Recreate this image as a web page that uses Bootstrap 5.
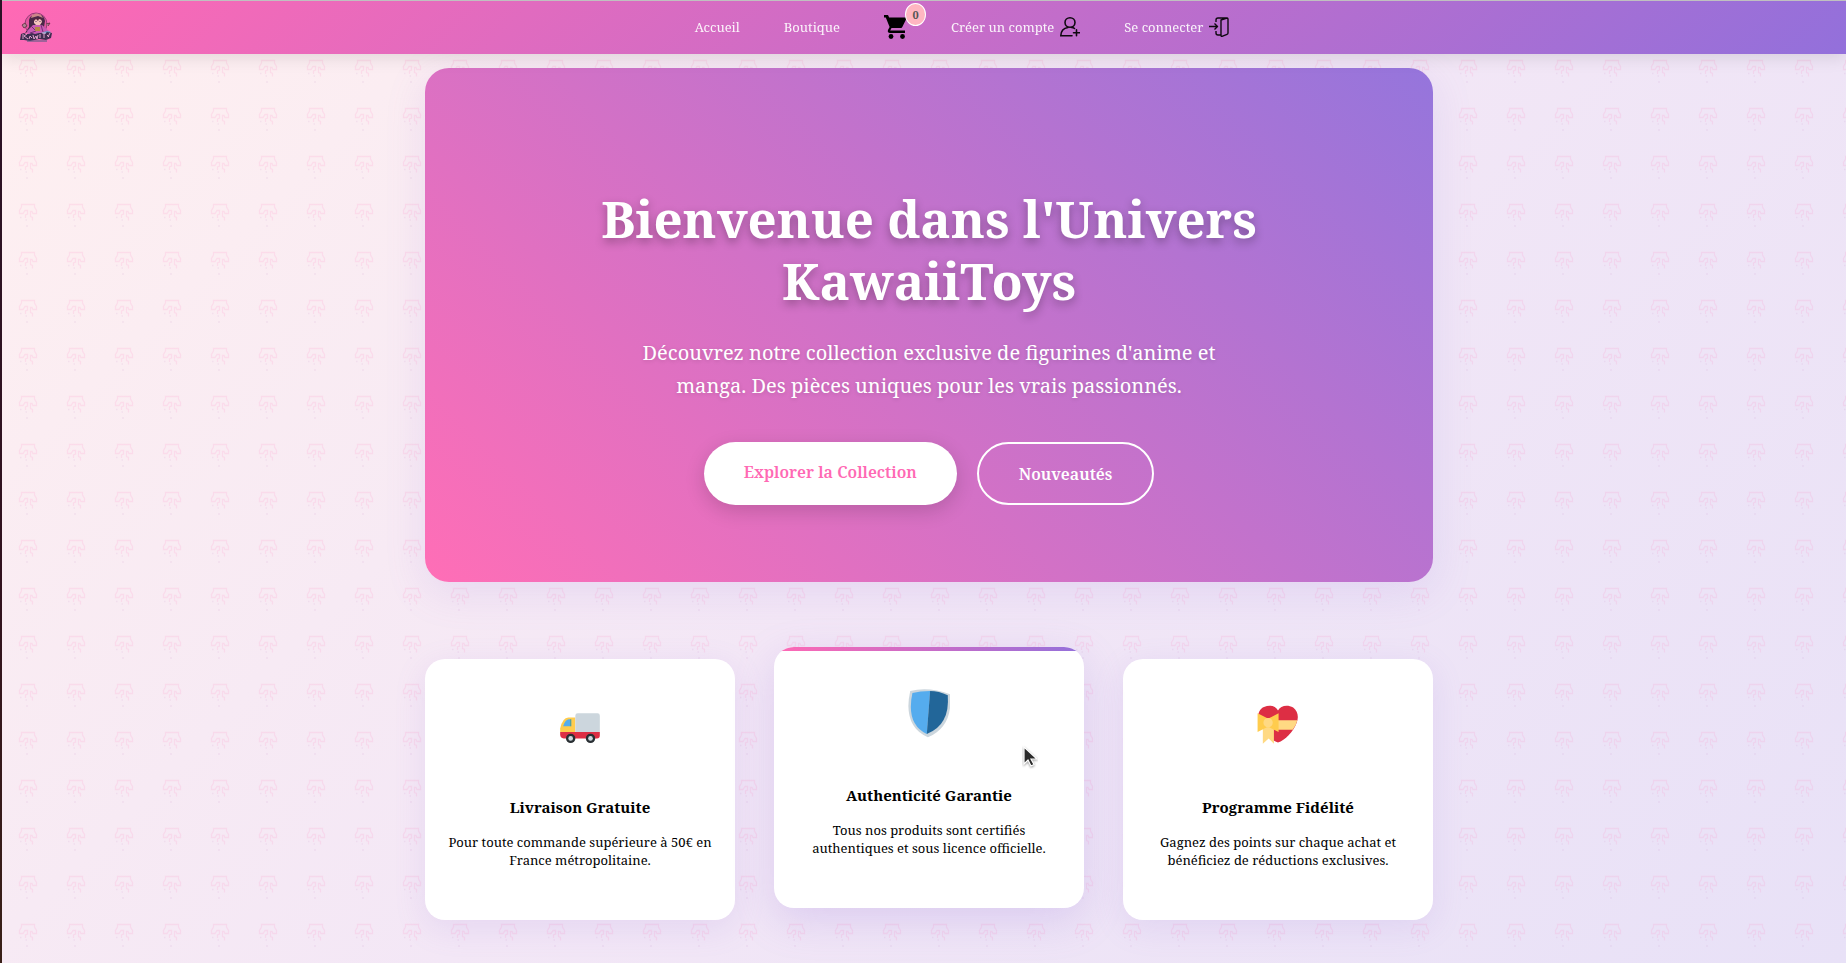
<!DOCTYPE html>
<html lang="fr">
<head>
<meta charset="utf-8">
<meta name="viewport" content="width=device-width, initial-scale=1">
<title>KawaiiToys</title>
<link href="https://cdn.jsdelivr.net/npm/bootstrap@5.3.0/dist/css/bootstrap.min.css" rel="stylesheet">
<style>
  :root { --rose: #ff69b4; --violet: #9370db; }
  html { background: linear-gradient(#2a1226, #32121f 60%, #3a2018); }
  body {
    font-family: "Noto Serif", "DejaVu Serif", serif;
    font-size: 13px; line-height: 18px; color: #000;
    min-height: 100vh; margin-left: 2px;
    border-top: 1px solid #c0c0c0;
    background:
      url("data:image/svg+xml,%3Csvg xmlns='http://www.w3.org/2000/svg' width='48' height='48'%3E%3Cg fill='none' stroke='%23ff69b4' stroke-opacity='.13' stroke-width='1.3'%3E%3Cpath d='M19.500 14v-2.500h13v2.500l2 3.500v3h-3.500l-1-2h-1.500v5l2 1v3M19.500 14l-2 3.500v3h3.500l2-3h2.500v3.500l-2 1v3'/%3E%3Cpath d='M18 24.500h1.500m4 2.500h1.500m-1 6h2' stroke='%23c080c0'/%3E%3C/g%3E%3C/svg%3E") 0 0,
      linear-gradient(135deg, #fff0f0 0%, #f3e7f6 50%, #e8e1f7 100%);
  }
  .site-bar { min-height: 53px; padding: 0 17px 2px; z-index: 2; background: linear-gradient(135deg, var(--rose), var(--violet)); box-shadow: 0 4px 16px rgba(0,0,0,.1); }
  .site-bar a { color: #fff; opacity: .92; text-decoration: none; }
  .site-bar .cart-link { opacity: 1; }
  .menu { gap: 44px; padding-left: 42px; }
  .menu-icon { margin-left: 6px; }
  .count { top: -12px; right: -19px; width: 21px; height: 23px; background: #ffb6c1; color: #555; border: 1px solid #fff; font-size: 11px; font-weight: 700; line-height: 21px; }
  .page { max-width: 1040px; padding: 14px 16px 43px; }
  .shell { padding-left: 10px; }
  .hero { border-radius: 24px; padding: 119px 160px 77px; background: linear-gradient(45deg, #ff6eb6, #9575dc); box-shadow: 0 10px 40px rgba(147,112,219,.15); color: #fff; }
  .hero h1 { font-size: 51px; line-height: 62px; font-weight: 700; margin: 0 0 25px; text-shadow: 0 4px 10px rgba(0,0,0,.3); }
  .hero .intro { font-size: 20px; line-height: 33px; max-width: 600px; margin: 0 auto 40px; text-shadow: 0 1px 4px rgba(0,0,0,.15); }
  .actions { gap: 20px; }
  .pill { border-radius: 32px; padding: 19px 40px 17px; font-size: 16px; line-height: 23px; font-weight: 600; text-decoration: none; }
  .pill-solid { background: #fff; color: var(--rose); box-shadow: 0 6px 20px rgba(0,0,0,.16); }
  .pill-line { border: 2px solid #fff; color: #fff; }
  .perks { display: grid; grid-template-columns: repeat(3, 1fr); gap: 39px; margin-top: 77px; }
  .perk { border-radius: 20px; background: #fff; padding: 36px 22px 51px; box-shadow: 0 8px 32px rgba(147,112,219,.14); }
  .perk h2 { font-size: 15px; line-height: 22px; font-weight: 700; margin: 41px 0 15px; }
  .perk svg.emoji { width: 42px; height: 60px; }
  .lifted { margin-top: -12px; margin-bottom: 12px; box-shadow: 0 12px 40px rgba(147,112,219,.22); }
  .stripe { height: 20px; inset: 0 0 auto 0; border-radius: 20px 20px 0 0; background: linear-gradient(90deg, var(--rose), var(--violet)) 0 0 / 100% 4px no-repeat; }
  .pointer { left: 80%; top: 98px; }
  @media (max-width: 900px) {
    .hero { padding: 60px 24px; }
    .perks { grid-template-columns: 1fr; }
    .menu { gap: 20px; padding-left: 12px; }
  }
</style>
</head>
<body>
<nav class="site-bar position-relative d-flex align-items-center" aria-label="Navigation principale">
  <a href="#" aria-label="KawaiiToys">
    <svg class="d-block" width="34" height="30" viewBox="0 0 34 30">
      <circle cx="17" cy="12" r="11" fill="#e0569f" stroke="#8b3a72" stroke-width="1"/>
      <path d="M10 8q1-5 7-6 8 0 9 7l-1 6 3 4-4 1H9l-3 1 4-6z" fill="#3c2340"/>
      <path d="M13 3q5-3 9 0l2 3-5-2-7 2z" fill="#c78a86"/>
      <path d="M15 7h7l1 3-2 3h-4l-2-2z" fill="#f6cdbf"/>
      <path d="M15 6h8v2l-3-1-1 2-2-2-2 2z" fill="#4a2038"/>
      <path d="M17 9v1m4-1v1" stroke="#4a2b63"/>
      <path d="M8 19l6-6h9l7 6-6 3H9z" fill="#c75ab5"/>
      <path d="M12 14l5 5-6 2m11-8l2 7" stroke="#6b2b72" fill="none"/>
      <path d="M16 15h5v4h-5z" fill="#b08a3e"/>
      <path d="M3 13l3-2 2 3-3 2zm24-1l4-1-2 3" fill="#a98794" stroke="#634"/>
      <path d="M22 21q6-3 10-1l-4 3H12z" fill="#35a9c9"/>
      <path d="M1 28l1-6 3-1 2 1 3 0 3-1 3 1 4-1 3 0 3 1 2-2 5 1-1 5-5 2-7-1-9 2-6-1z" fill="#302849"/>
      <path d="M4 22v5m4-5l-3 2 4 3m1 0l1-3 2 2m1-3l1 4 2-3 1 3 1-4m2-1v4m2-5h4m-2 0v5m3-3l2 2m1-4l-2 4" stroke="#f0b3db" fill="none" stroke-width=".9"/>
      <path d="M8 29h20" stroke="#355b78"/>
    </svg>
  </a>
  <ul class="menu list-unstyled d-flex align-items-center mb-0 mx-auto">
    <li><a href="#">Accueil</a></li>
    <li><a href="#">Boutique</a></li>
    <li><a class="cart-link position-relative d-block" href="#" aria-label="Panier">
      <svg class="d-block" width="23" height="24" viewBox="0 0 23 24"><path fill="#000" d="M0 0h4l1.200 2.400H23l-4.700 9.500q-.7 1.200-2 1.200H7.500L6.200 15.600H21V18H6q-3-.5-2-3l1.600-3L1.800 2.400H0z"/><circle cx="7" cy="21.500" r="2.400"/><circle cx="18.500" cy="21.500" r="2.400"/></svg>
      <span class="count position-absolute rounded-circle text-center">0</span>
    </a></li>
    <li><a class="d-flex align-items-center" href="#">Créer un compte
      <svg class="menu-icon" width="20" height="20" viewBox="0 0 20 20" fill="none" stroke="#000" stroke-width="1.600" stroke-linecap="round"><ellipse cx="10" cy="5.500" rx="5" ry="4.700"/><path d="M8 10.500C4 11 1 14 .8 18.800H12M11.500 10.500q2 0 3 1M13.500 15.800h6M16.500 12.800v6"/></svg></a></li>
    <li><a class="d-flex align-items-center" href="#">Se connecter
      <svg class="menu-icon" width="20" height="20" viewBox="0 0 20 20" fill="none" stroke="#000" stroke-width="1.400" stroke-linejoin="round"><path d="M12 3l6-2q1 0 1 1v14q0 1-1 1.300l-5 2q-1 .2-1-1zM18.500 1H9Q7 1 7 3v2M7 14v2q0 2 2 2h3M0 9.500h8M5.500 6.500l3 3-3 3"/></svg></a></li>
  </ul>
</nav>

<div class="shell">
<main class="page container-fluid mx-auto">
  <section class="hero text-center">
    <h1>Bienvenue dans l'Univers KawaiiToys</h1>
    <p class="intro">Découvrez notre collection exclusive de figurines d'anime et manga. Des pièces uniques pour les vrais passionnés.</p>
    <div class="actions d-flex flex-wrap justify-content-center">
      <a class="pill pill-solid" href="#">Explorer la Collection</a>
      <a class="pill pill-line" href="#">Nouveautés</a>
    </div>
  </section>

  <section class="perks text-center">
    <article class="perk">
      <svg class="emoji" viewBox="0 0 36 36" aria-hidden="true">
        <path fill="#DD2E44" d="M1 24h34v3q0 2.500-2.500 2.500H4Q1 29.500 1 26z"/>
        <path fill="#FFCC4D" d="M1 24v-3Q3 11.500 8 11.500h6V24z"/>
        <path fill="#55ACEE" d="M3.500 19Q5.500 13 8.500 13h2v6z"/>
        <path fill="#5C913B" d="M9.500 13h1v6h-1z" opacity=".5"/>
        <path fill="#CCD6DD" d="M14 24V10q0-2 2-2h17q2 0 2 2v14z"/>
        <circle cx="10" cy="29.500" r="4" fill="#292F33"/><circle cx="10" cy="29.500" r="2" fill="#CCD6DD"/>
        <circle cx="27" cy="29.500" r="4" fill="#292F33"/><circle cx="27" cy="29.500" r="2" fill="#CCD6DD"/>
      </svg>
      <h2>Livraison Gratuite</h2>
      <p class="mb-0">Pour toute commande supérieure à 50€ en France métropolitaine.</p>
    </article>
    <article class="perk lifted position-relative">
      <div class="stripe position-absolute"></div>
      <svg class="emoji" viewBox="1 3 38 44" aria-hidden="true">
        <path fill="#CCD6DD" d="M3 5q17-4 36 3 3 29-20 39Q-4 37 3 5z"/>
        <path fill="#55ACEE" d="M5 7q7-2 16-2l-3 39Q-1 35 5 7z"/>
        <path fill="#226699" d="M21 5q8 0 16 4 2 27-19 35z"/>
      </svg>
      <h2>Authenticité Garantie</h2>
      <p class="mb-0">Tous nos produits sont certifiés authentiques et sous licence officielle.</p>
      <svg class="pointer position-absolute" width="16" height="24" viewBox="0 0 16 24" aria-hidden="true"><path d="M2 2v17l4-4 3 6 3-1.500-3-5.500h6z" fill="#2b2b2b" stroke="#fff" stroke-width="1.200" style="filter:drop-shadow(0 1px 1px #0006)"/></svg>
    </article>
    <article class="perk">
      <svg class="emoji" viewBox="0 0 36 36" aria-hidden="true">
        <path fill="#DD2E44" d="M18 5.500C20 1.500 26 0 31 3c4 3 5 8 3 13C31 24 24 31 18 33 12 31 4 23 1.500 15 0 9 2 4 6 2.500c5-2 10-1 12 3z"/>
        <path fill="#fff" d="M0 18h5v18H0zm5 16l5-4.500 4.500 4.500v2H5z"/>
        <path fill="#FFD983" d="M15 14h19.600q-1 4.500-4 8H15z"/>
        <path fill="#FFD983" d="M5 19h9.500v15L10 29.500 5 34z"/>
        <path fill="#FFCC4D" d="M.5 8l8 4h2l8-4v16l-8-4h-2l-8 4z"/>
        <circle cx="9.500" cy="16" r="4" fill="#FFD983"/>
      </svg>
      <h2>Programme Fidélité</h2>
      <p class="mb-0">Gagnez des points sur chaque achat et bénéficiez de réductions exclusives.</p>
    </article>
  </section>
</main>
</div>
<script src="https://cdn.jsdelivr.net/npm/bootstrap@5.3.0/dist/js/bootstrap.bundle.min.js"></script>
</body>
</html>
